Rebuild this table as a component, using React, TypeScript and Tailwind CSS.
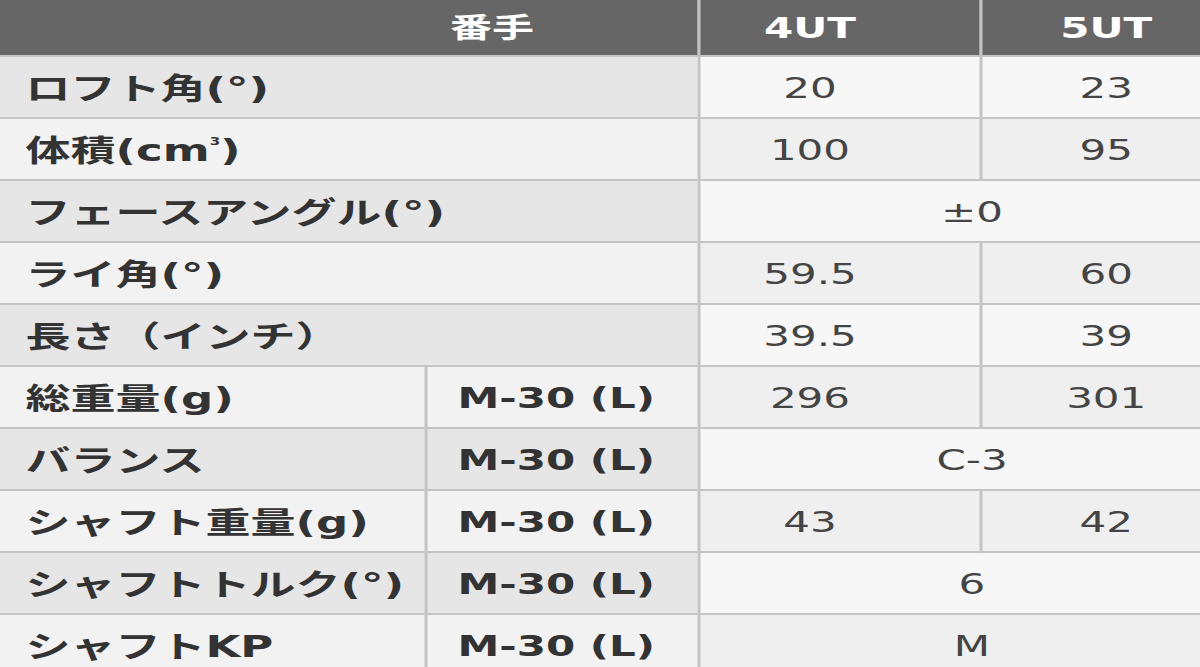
type Row = {
  label: React.ReactNode;
  shaft?: string;
  values: string[];
};

const rows: Row[] = [
  { label: 'ロフト角(°)', values: ['20', '23'] },
  {
    label: (
      <>
        体積(cm<span className="text-[10px] relative -top-[9px]">3</span>)
      </>
    ),
    values: ['100', '95'],
  },
  { label: 'フェースアングル(°)', values: ['±0'] },
  { label: 'ライ角(°)', values: ['59.5', '60'] },
  { label: '長さ（インチ）', values: ['39.5', '39'] },
  { label: '総重量(g)', shaft: 'M-30 (L)', values: ['296', '301'] },
  { label: 'バランス', shaft: 'M-30 (L)', values: ['C-3'] },
  { label: 'シャフト重量(g)', shaft: 'M-30 (L)', values: ['43', '42'] },
  { label: 'シャフトトルク(°)', shaft: 'M-30 (L)', values: ['6'] },
  { label: 'シャフトKP', shaft: 'M-30 (L)', values: ['M'] },
];

export default function App() {
  return (
    <div className="w-[1200px] h-[667px] overflow-hidden bg-white">
      <div
        className="w-[800px] origin-left scale-x-150 grid grid-cols-[283px_182px_188px_147px] text-[28px] leading-none"
        style={{ fontFamily: '"DejaVu Sans", "Noto Sans CJK JP", sans-serif' }}
      >
        {/* Header */}
        <div className="col-span-2 h-[57px] bg-[#666666] border-b-2 border-[#c4c4c4] flex items-center pt-[2px] pl-[300px] text-white font-bold">
          番手
        </div>
        <div className="h-[57px] bg-[#666666] border-b-2 border-l-2 border-[#c4c4c4] flex items-center justify-center pt-[2px] pr-[40px] text-white font-bold">
          4UT
        </div>
        <div className="h-[57px] bg-[#666666] border-b-2 border-l-2 border-[#c4c4c4] flex items-center justify-center pt-[2px] pl-[20px] text-white font-bold">
          5UT
        </div>

        {rows.map((row, i) => {
          const odd = i % 2 === 0;
          const labelBg = odd ? 'bg-[#e6e6e6]' : 'bg-[#f2f2f2]';
          const valueBg = odd ? 'bg-[#f7f7f7]' : 'bg-[#efefef]';
          return [
            <div
              key={`l${i}`}
              className={`${row.shaft ? '' : 'col-span-2'} ${labelBg} h-[62px] border-b-2 border-[#c4c4c4] flex items-center pt-[4px] pl-[17px] text-[30px] font-bold text-[#333333]`}
            >
              {row.label}
            </div>,
            row.shaft && (
              <div
                key={`s${i}`}
                className={`${labelBg} h-[62px] border-b-2 border-l-2 border-[#c4c4c4] flex items-center pt-[4px] pl-[20px] font-bold text-[#333333]`}
              >
                {row.shaft}
              </div>
            ),
            row.values.length === 1 ? (
              <div
                key={`v${i}`}
                className={`col-span-2 ${valueBg} h-[62px] border-b-2 border-l-2 border-[#c4c4c4] flex items-center justify-center pt-[4px] pl-[29px] text-[#444444]`}
              >
                {row.values[0]}
              </div>
            ) : (
              [
                <div
                  key={`a${i}`}
                  className={`${valueBg} h-[62px] border-b-2 border-l-2 border-[#c4c4c4] flex items-center justify-center pt-[4px] pr-[40px] text-[#444444]`}
                >
                  {row.values[0]}
                </div>,
                <div
                  key={`b${i}`}
                  className={`${valueBg} h-[62px] border-b-2 border-l-2 border-[#c4c4c4] flex items-center justify-center pt-[4px] pl-[20px] text-[#444444]`}
                >
                  {row.values[1]}
                </div>,
              ]
            ),
          ];
        })}
      </div>
    </div>
  );
}
